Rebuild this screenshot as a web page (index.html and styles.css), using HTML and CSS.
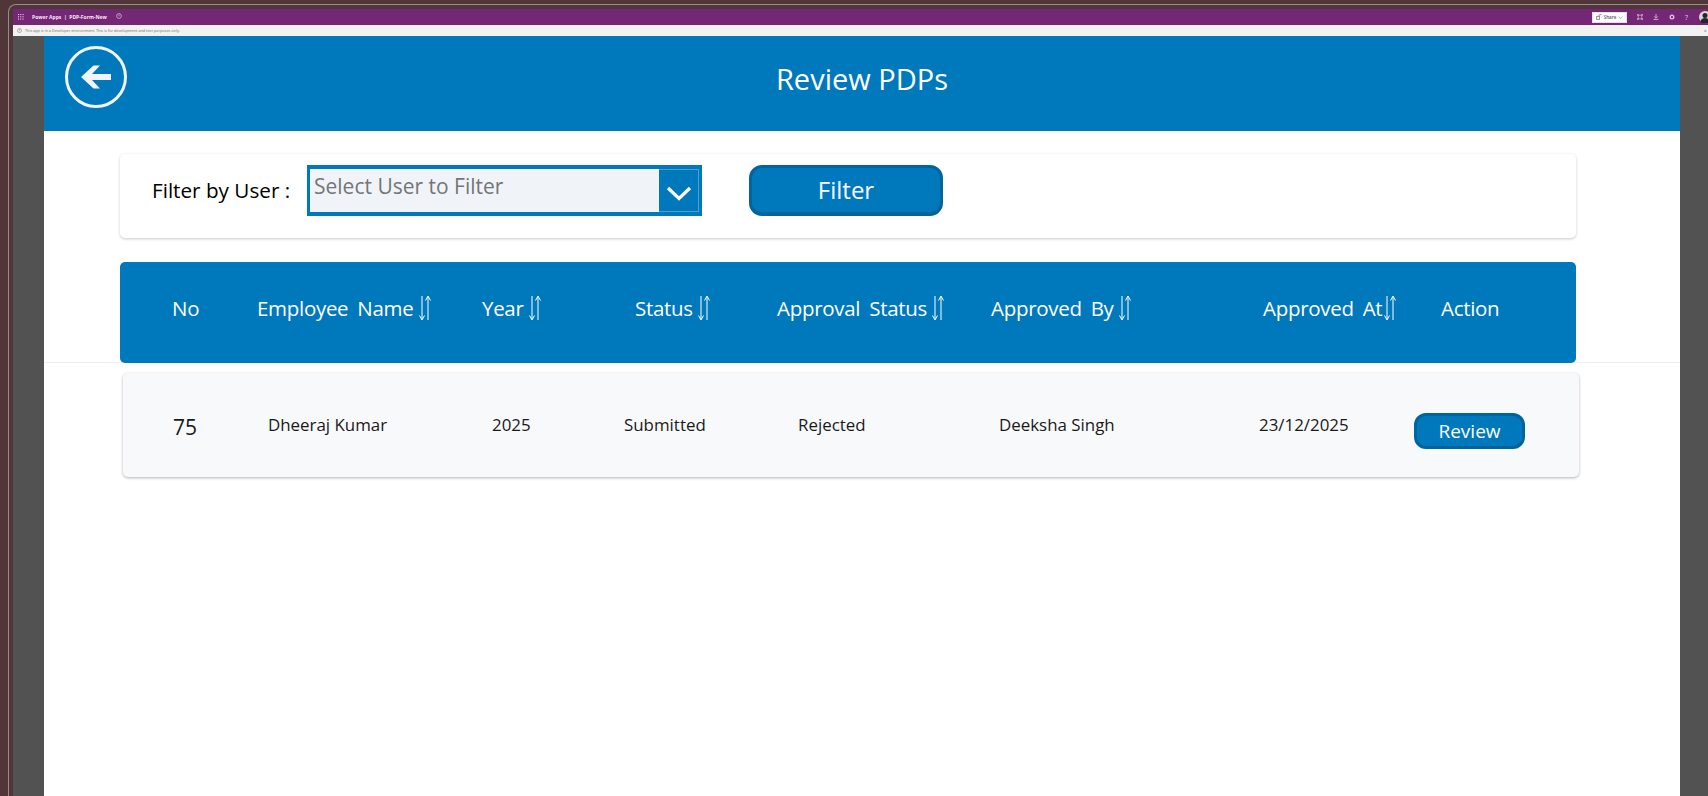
FILE: index.html
```html
<!DOCTYPE html>
<html lang="en">
<head>
<meta charset="utf-8">
<title>Review PDPs</title>
<link rel="stylesheet" href="styles.css">
</head>
<body>
<div class="shell">
  <div class="frame">
    <div class="suite">
      <svg class="waffle" viewBox="0 0 9 9" aria-hidden="true"><g fill="#e8d8ea"><rect width="1.6" height="1.6"/><rect x="3.4" width="1.6" height="1.6"/><rect x="6.8" width="1.6" height="1.6"/><rect y="3.4" width="1.6" height="1.6"/><rect x="3.4" y="3.4" width="1.6" height="1.6"/><rect x="6.8" y="3.4" width="1.6" height="1.6"/><rect y="6.8" width="1.6" height="1.6"/><rect x="3.4" y="6.8" width="1.6" height="1.6"/><rect x="6.8" y="6.8" width="1.6" height="1.6"/></g></svg>
      <span class="suite-title">Power Apps &nbsp;|&nbsp; PDP-Form-New</span>
      <svg class="info-dark" viewBox="0 0 10 10" aria-hidden="true"><circle cx="5" cy="5" r="4" fill="none" stroke="#efe3f0"/><path d="M5 2.6v3" stroke="#efe3f0"/></svg>
      <span class="suite-space"></span>
      <span class="share"><svg class="share-ico" viewBox="0 0 10 10" aria-hidden="true"><path d="M1 4h5v5H1zM4 4l2-3h3" fill="none" stroke="#444"/></svg>Share<svg class="share-chev" viewBox="0 0 8 5" aria-hidden="true"><path d="M1 1l3 3 3-3" fill="none" stroke="#777"/></svg></span>
      <svg class="suite-ico" viewBox="0 0 10 10" aria-hidden="true"><path d="M2 2h6v6H2zM0 0h2v2H0zM8 0h2v2H8zM0 8h2v2H0zM8 8h2v2H8z" fill="none" stroke="#e4cfe6"/></svg>
      <svg class="suite-ico" viewBox="0 0 10 10" aria-hidden="true"><path d="M5 0v6M2 4l3 3 3-3M1 9h8" fill="none" stroke="#e4cfe6" stroke-width="1.3"/></svg>
      <svg class="suite-ico" viewBox="0 0 10 10" aria-hidden="true"><circle cx="5" cy="5" r="3" fill="none" stroke="#d8b8da" stroke-width="2.4"/></svg>
      <span class="help">?</span>
      <svg class="avatar" viewBox="0 0 12 12" aria-hidden="true"><circle cx="6" cy="6" r="6" fill="#d9d4d6"/><path d="M1.5 11c.4-3 2-4 4.5-4s4 1 4.5 4a6 6 0 0 1-9 0z" fill="#22262e"/><circle cx="6" cy="4.5" r="2.5" fill="#2b2327"/></svg>
    </div>
    <div class="notice">
      <svg class="notice-ico" viewBox="0 0 10 10" aria-hidden="true"><circle cx="5" cy="5" r="4" fill="none" stroke="#666"/><path d="M5 2.6v3" stroke="#666"/></svg>
      <span class="notice-text">This app is in a Developer environment. This is for development and test purposes only.</span>
      <span class="notice-x">×</span>
    </div>
    <div class="stage">
      <main class="canvas">
        <header class="banner">
          <button class="back" aria-label="Back">
            <svg viewBox="0 0 30 24" aria-hidden="true"><path d="M0 12 L12.5 0.5 H19 L11 9 H30 V15 H11 L19 23.5 H12.5 Z" fill="#f1f4f9"/></svg>
          </button>
          <h1 class="banner-title">Review PDPs</h1>
        </header>
        <section class="top">
          <div class="filter-card">
            <span class="filter-label">Filter by User :</span>
            <div class="combo">
              <span class="combo-text">Select User to Filter</span>
              <span class="combo-btn"><svg viewBox="0 0 26 15" aria-hidden="true"><path d="M2 2 L13 12.5 L24 2" fill="none" stroke="#fff" stroke-width="3.2"/></svg></span>
            </div>
            <button class="filter-btn">Filter</button>
          </div>
          <div class="thead">
            <span class="th">No</span>
            <span class="th">Employee Name<svg class="sort" viewBox="0 0 14 26" aria-hidden="true"><path d="M4 1v23M1.5 20.5L4 25l2.5-4.5M10 25V2M7.5 5.5L10 1l2.5 4.5" fill="none" stroke="#fff"/></svg></span>
            <span class="th">Year<svg class="sort" viewBox="0 0 14 26" aria-hidden="true"><path d="M4 1v23M1.5 20.5L4 25l2.5-4.5M10 25V2M7.5 5.5L10 1l2.5 4.5" fill="none" stroke="#fff"/></svg></span>
            <span class="th">Status<svg class="sort" viewBox="0 0 14 26" aria-hidden="true"><path d="M4 1v23M1.5 20.5L4 25l2.5-4.5M10 25V2M7.5 5.5L10 1l2.5 4.5" fill="none" stroke="#fff"/></svg></span>
            <span class="th">Approval Status<svg class="sort" viewBox="0 0 14 26" aria-hidden="true"><path d="M4 1v23M1.5 20.5L4 25l2.5-4.5M10 25V2M7.5 5.5L10 1l2.5 4.5" fill="none" stroke="#fff"/></svg></span>
            <span class="th">Approved By<svg class="sort" viewBox="0 0 14 26" aria-hidden="true"><path d="M4 1v23M1.5 20.5L4 25l2.5-4.5M10 25V2M7.5 5.5L10 1l2.5 4.5" fill="none" stroke="#fff"/></svg></span>
            <span class="th">Approved At<svg class="sort sort-tight" viewBox="0 0 14 26" aria-hidden="true"><path d="M4 1v23M1.5 20.5L4 25l2.5-4.5M10 25V2M7.5 5.5L10 1l2.5 4.5" fill="none" stroke="#fff"/></svg></span>
            <span class="th">Action</span>
          </div>
        </section>
        <div class="row">
          <span class="td td-no">75</span>
          <span class="td">Dheeraj Kumar</span>
          <span class="td">2025</span>
          <span class="td">Submitted</span>
          <span class="td">Rejected</span>
          <span class="td">Deeksha Singh</span>
          <span class="td">23/12/2025</span>
          <button class="review-btn">Review</button>
        </div>
      </main>
    </div>
  </div>
</div>
</body>
</html>
```

FILE: styles.css
```css
* { box-sizing: border-box; }
html, body { margin: 0; height: 100%; }
body { background: #503539; font-family: "Open Sans", "Noto Sans", sans-serif; overflow: hidden; }
button { font-family: inherit; padding: 0; cursor: pointer; }

.shell { height: 796px; padding: 4px 0 0 8px; }
.frame {
  height: 792px;
  padding: 4px 0 0 4px;
  border-top: 1px solid #9a8a8c;
  border-left: 1px solid #9a8a8c;
  border-top-left-radius: 8px;
  display: flex;
  flex-direction: column;
}

.suite { height: 16px; background: #742774; display: flex; align-items: center; padding-left: 5px; color: #f4e9f4; flex: none; }
.waffle { width: 6px; height: 6px; }
.suite-title { font-size: 5px; font-weight: 700; margin-left: 8px; white-space: nowrap; }
.info-dark { width: 6px; height: 6px; margin-left: 9px; margin-top: -2px; }
.suite-space { flex: 1; }
.share { width: 35px; height: 11px; background: #fff; border: 1px solid #e8e0e8; display: flex; align-items: center; justify-content: center; gap: 2px; color: #555; font-size: 4.5px; font-weight: 600; margin-right: 10px; }
.share-ico { width: 6px; height: 6px; }
.share-chev { width: 5px; height: 3px; }
.suite-ico { width: 6px; height: 6px; margin-right: 10px; }
.help { font-size: 7px; color: #e4cfe6; margin-right: 9px; width: 5px; }
.avatar { width: 12px; height: 12px; margin-right: -3px; flex: none; }

.notice { height: 11px; background: #f3f2f1; display: flex; align-items: center; padding: 0 1px 0 4px; flex: none; }
.notice-ico { width: 5px; height: 5px; }
.notice-text { font-size: 3.8px; color: #6b6b6b; margin-left: 3px; flex: 1; white-space: nowrap; }
.notice-x { font-size: 6px; color: #888; }

.stage { flex: 1; background: #525252; padding: 0 28px 0 31px; min-height: 0; }
.canvas { height: 100%; background: #fff; }

.banner { height: 95px; background: #0078bc; display: flex; align-items: flex-start; position: relative; padding: 10px 0 0 21px; }
.back { width: 62px; height: 62px; border: 3px solid #f1f4f9; border-radius: 50%; background: transparent; display: flex; align-items: center; justify-content: center; }
.back svg { width: 30px; height: 24px; margin-right: 1px; }
.banner-title { position: absolute; left: 0; right: 0; top: 22px; margin: 0; text-align: center; color: #fff; font-size: 29px; font-weight: 400; line-height: 41px; }

.top { height: 232px; padding: 23px 0 0 76px; border-bottom: 1px solid #eeeeee; }
.filter-card {
  width: 1456px;
  height: 84px;
  background: #fff;
  border-radius: 5px;
  box-shadow: 0 1px 3px rgba(0,0,0,.22);
  display: flex;
  align-items: center;
  padding: 0 0 11px 32px;
}
.filter-label { width: 155px; color: #000; font-size: 20.7px; line-height: 27px; white-space: nowrap; }
.combo { width: 395px; height: 51px; border: solid #0078bc; border-width: 4px 3px; background: #f0f4f9; display: flex; }
.combo-text { flex: 1; color: #757575; font-size: 21px; line-height: 26px; padding: 4px 0 0 4px; white-space: nowrap; }
.combo-btn { width: 40px; background: #0078bc; border: 1px solid #4f9ecd; border-left: 0; display: flex; align-items: center; justify-content: center; }
.combo-btn svg { width: 26px; height: 15px; margin-top: 5px; }
.filter-btn { width: 194px; height: 51px; margin-left: 47px; background: #0078bc; border: 3px solid #00659f; border-bottom-width: 4px; border-radius: 13px; color: #fff; font-size: 24px; line-height: 30px; }

.thead {
  width: 1456px;
  height: 101px;
  margin-top: 24px;
  background: #0078bc;
  border-radius: 5px;
  position: relative;
  display: grid;
  grid-template-columns: 85px 225px 153px 142px 214px 272px 178px 135px;
  padding: 31px 0 0 52px;
  align-items: start;
}
.th { color: #fff; font-size: 20.5px; line-height: 30px; letter-spacing: -.3px; word-spacing: 4px; white-space: nowrap; display: flex; align-items: center; }
.sort { width: 14px; height: 26px; margin-left: 4.5px; flex: none; }
.sort-tight { margin-left: 1px; }

.row {
  width: 1456px;
  height: 104px;
  margin: 10px 0 0 79px;
  background: #f8f9fb;
  border-radius: 5px;
  box-shadow: 0 1px 3px rgba(0,0,0,.3);
  display: grid;
  grid-template-columns: 95px 224px 132px 174px 201px 260px 155px 111px;
  padding: 0 0 0 50px;
}
.td { color: #1a1a1a; font-size: 16.9px; line-height: 23px; padding-top: 40px; white-space: nowrap; }
.td-no { font-size: 21px; padding-top: 40px; line-height: 29px; }
.review-btn { width: 111px; height: 36px; margin-top: 40px; background: #0078bc; border: 3px solid #00659f; border-radius: 12px; color: #fff; font-size: 19px; line-height: 24px; }
```
